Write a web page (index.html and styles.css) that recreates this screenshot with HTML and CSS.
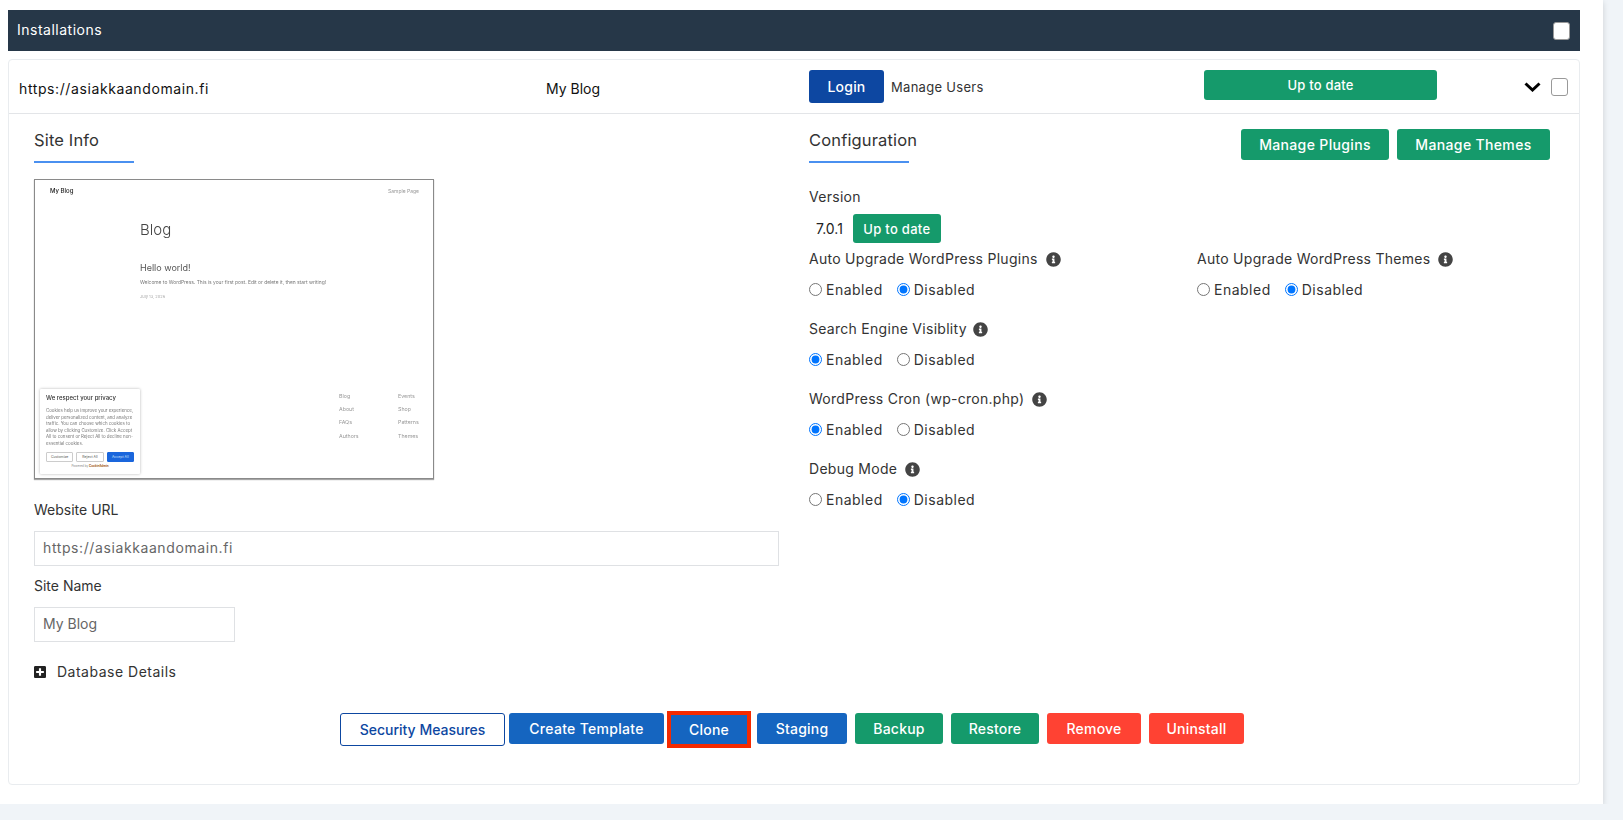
FILE: index.html
```html
<!DOCTYPE html>
<html lang="en">
<head>
    <meta charset="UTF-8">
    <title>Installations</title>
    <link rel="stylesheet" href="styles.css">
</head>
<body>
    <svg class="defs" width="0" height="0">
        <symbol id="info" viewBox="0 0 512 512"><path d="M256 8C119.043 8 8 119.083 8 256c0 136.997 111.043 248 248 248s248-111.003 248-248C504 119.083 392.957 8 256 8zm0 110c23.196 0 42 18.804 42 42s-18.804 42-42 42-42-18.804-42-42 18.804-42 42-42zm56 254c0 6.627-5.373 12-12 12h-88c-6.627 0-12-5.373-12-12v-24c0-6.627 5.373-12 12-12h12v-64h-12c-6.627 0-12-5.373-12-12v-24c0-6.627 5.373-12 12-12h64c6.627 0 12 5.373 12 12v100h12c6.627 0 12 5.373 12 12v24z"/></symbol>
    </svg>
    <div class="panel">
        <div class="panel-head">
            <span class="panel-title">Installations</span>
            <input type="checkbox" class="check">
        </div>
        <div class="card">
            <div class="row">
                <span class="row-url">https://asiakkaandomain.fi</span>
                <span class="row-name">My Blog</span>
                <div class="row-login">
                    <a class="btn btn-navy">Login</a>
                    <span class="manage-users">Manage Users</span>
                </div>
                <div class="row-end">
                    <a class="btn btn-green btn-wide">Up to date</a>
                    <svg class="chevron" viewBox="0 0 17 10"><polyline points="1.5,1.5 8.5,8 15.5,1.5"/></svg>
                    <input type="checkbox" class="check">
                </div>
            </div>
            <div class="details">
                <div class="col-left">
                    <h3 class="title">Site Info</h3>
                    <div class="shot">
                        <div class="shot-top"><b>My Blog</b><span>Sample Page</span></div>
                        <div class="shot-post">
                            <div class="shot-h1">Blog</div>
                            <div class="shot-h2">Hello world!</div>
                            <div class="shot-p">Welcome to WordPress. This is your first post. Edit or delete it, then start writing!</div>
                            <div class="shot-date">July 13, 2026</div>
                        </div>
                        <div class="shot-links">
                            <span>Blog</span><span>Events</span>
                            <span>About</span><span>Shop</span>
                            <span>FAQs</span><span>Patterns</span>
                            <span>Authors</span><span>Themes</span>
                        </div>
                        <div class="cookie">
                            <div class="cookie-title">We respect your privacy</div>
                            <div class="cookie-text">Cookies help us improve your experience, deliver personalized content, and analyze traffic. You can choose which cookies to allow by clicking Customize. Click Accept All to consent or Reject All to decline non-essential cookies.</div>
                            <div class="cookie-btns"><span>Customize</span><span>Reject All</span><span class="cookie-accept">Accept All</span></div>
                            <div class="cookie-foot">Powered by <b>CookieAdmin</b></div>
                        </div>
                    </div>
                    <label class="field-label">Website URL</label>
                    <input class="field" type="text" value="https://asiakkaandomain.fi">
                    <label class="field-label field-label-next">Site Name</label>
                    <input class="field field-short" type="text" value="My Blog">
                    <div class="db-details">
                        <svg class="plus" viewBox="0 0 448 512"><path d="M400 32H48C21.5 32 0 53.5 0 80v352c0 26.5 21.5 48 48 48h352c26.5 0 48-21.5 48-48V80c0-26.5-21.5-48-48-48zm-32 252c0 6.6-5.4 12-12 12h-92v92c0 6.6-5.4 12-12 12h-56c-6.6 0-12-5.4-12-12v-92H92c-6.6 0-12-5.4-12-12v-56c0-6.6 5.4-12 12-12h92v-92c0-6.6 5.4-12 12-12h56c6.6 0 12 5.4 12 12v92h92c6.6 0 12 5.4 12 12v56z"/></svg>
                        <span>Database Details</span>
                    </div>
                </div>
                <div class="col-right">
                    <div class="config-head">
                        <h3 class="title">Configuration</h3>
                        <div class="config-btns">
                            <a class="btn btn-green btn-plugins">Manage Plugins</a>
                            <a class="btn btn-green btn-themes">Manage Themes</a>
                        </div>
                    </div>
                    <div class="opt-label">Version</div>
                    <div class="version">
                        <span>7.0.1</span>
                        <a class="btn btn-green btn-small">Up to date</a>
                    </div>
                    <div class="opt-grid">
                        <div class="opt">
                            <div class="opt-label">Auto Upgrade WordPress Plugins <svg class="info"><use href="#info"/></svg></div>
                            <div class="radios">
                                <label><input type="radio" name="plugins">Enabled</label>
                                <label><input type="radio" name="plugins" checked>Disabled</label>
                            </div>
                        </div>
                        <div class="opt">
                            <div class="opt-label">Auto Upgrade WordPress Themes <svg class="info"><use href="#info"/></svg></div>
                            <div class="radios">
                                <label><input type="radio" name="themes">Enabled</label>
                                <label><input type="radio" name="themes" checked>Disabled</label>
                            </div>
                        </div>
                    </div>
                    <div class="opt">
                        <div class="opt-label opt-label-search">Search Engine Visiblity <svg class="info"><use href="#info"/></svg></div>
                        <div class="radios">
                            <label><input type="radio" name="search" checked>Enabled</label>
                            <label><input type="radio" name="search">Disabled</label>
                        </div>
                    </div>
                    <div class="opt">
                        <div class="opt-label">WordPress Cron (wp-cron.php) <svg class="info"><use href="#info"/></svg></div>
                        <div class="radios">
                            <label><input type="radio" name="cron" checked>Enabled</label>
                            <label><input type="radio" name="cron">Disabled</label>
                        </div>
                    </div>
                    <div class="opt">
                        <div class="opt-label">Debug Mode <svg class="info"><use href="#info"/></svg></div>
                        <div class="radios">
                            <label><input type="radio" name="debug">Enabled</label>
                            <label><input type="radio" name="debug" checked>Disabled</label>
                        </div>
                    </div>
                </div>
            </div>
            <div class="actions">
                <a class="btn btn-outline act-security">Security Measures</a>
                <a class="btn btn-blue act-template">Create Template</a>
                <a class="btn btn-blue btn-marked act-clone">Clone</a>
                <a class="btn btn-blue act-staging">Staging</a>
                <a class="btn btn-green act-backup">Backup</a>
                <a class="btn btn-green act-restore">Restore</a>
                <a class="btn btn-red act-remove">Remove</a>
                <a class="btn btn-red act-uninstall">Uninstall</a>
            </div>
        </div>
    </div>
</body>
</html>
```

FILE: styles.css
```css
body {
    margin: 0;
    background-color: #f0f4f8;
    color: #222;
    font-family: Inter, "Noto Sans", sans-serif;
    font-size: 14px;
}
.defs {
    display: block;
    height: 0;
}
.panel {
    width: 1572px;
    height: 794px;
    padding: 10px 23px 0 8px;
    background: #fff;
    box-shadow: 0 2px 6px rgba(0, 0, 0, 0.15);
}
.panel-head {
    display: flex;
    justify-content: space-between;
    align-items: center;
    height: 41px;
    padding: 0 10px 0 9px;
    background: #263748;
    color: #fff;
}
.panel-title {
    padding-bottom: 2px;
    letter-spacing: 0.5px;
}
.check {
    appearance: none;
    width: 17px;
    height: 18px;
    margin: 0;
    background: #fff;
    border: 1px solid #999;
    border-radius: 3px;
}
.card {
    height: 724px;
    margin-top: 8px;
    border: 1px solid #e9ecef;
    border-radius: 4px;
}
.row {
    display: grid;
    grid-template-columns: 527px 263px 395px 1fr;
    align-items: center;
    height: 53px;
    padding-left: 10px;
    border-bottom: 1px solid #e3e5e8;
    color: #111;
}
.row-url {
    padding-top: 3px;
    letter-spacing: 0.6px;
}
.row-name {
    padding-top: 3px;
}
.row-login {
    display: flex;
    align-items: center;
    gap: 7px;
}
.manage-users {
    font-size: 13px;
    letter-spacing: 0.3px;
    color: #333;
}
.row-end {
    display: flex;
    align-items: center;
    padding-right: 11px;
}
.chevron {
    width: 17px;
    height: 10px;
    margin: 0 10px 0 87px;
    fill: none;
    stroke: #000;
    stroke-width: 3;
}
.btn {
    display: flex;
    justify-content: center;
    align-items: center;
    box-sizing: border-box;
    height: 31px;
    border-radius: 3px;
    color: #fff;
    font-weight: 500;
    font-size: 14px;
    letter-spacing: 0.2px;
}
.btn-navy {
    width: 75px;
    height: 33px;
    background: #0d47a1;
}
.btn-green {
    background: #159a6b;
}
.btn-blue {
    background: #1565c0;
}
.btn-red {
    background: #ff4233;
}
.btn-outline {
    height: 33px;
    background: #fff;
    border: 1px solid #0d47a1;
    color: #0d47a1;
    letter-spacing: 0;
}
.btn-marked {
    height: 37px;
    margin-top: -2px;
    border: 4px solid #f52a00;
    border-radius: 0;
}
.btn-wide {
    width: 233px;
    height: 30px;
    margin-top: -3px;
    font-size: 13px;
}
.details {
    display: grid;
    grid-template-columns: 745px 741px;
    column-gap: 30px;
    height: 599px;
    padding: 0 25px;
}
.title {
    box-sizing: border-box;
    width: 100px;
    height: 49px;
    margin: 0;
    padding: 14px 0 10px;
    border-bottom: 2px solid #4a90f0;
    font-size: 16.5px;
    line-height: 24px;
    font-weight: 400;
    letter-spacing: 0.15px;
    white-space: nowrap;
    color: #333;
}
.shot {
    position: relative;
    box-sizing: border-box;
    width: 400px;
    height: 300px;
    margin-top: 16px;
    padding: 7px 14px 0 15px;
    border: 1px solid #8a8a8a;
    box-shadow: 0 1px 1px rgba(0, 0, 0, 0.35);
    color: #555;
    overflow: hidden;
}
.shot-top {
    display: flex;
    justify-content: space-between;
    font-size: 5px;
    line-height: 8px;
    color: #999;
    filter: blur(0.25px);
}
.shot-top b {
    font-size: 6px;
    color: #222;
    font-weight: 500;
}
.shot-post {
    margin: 25px 0 0 90px;
    filter: blur(0.25px);
}
.shot-h1 {
    font-size: 15px;
    line-height: 20px;
    font-weight: 300;
    color: #444;
}
.shot-h2 {
    margin-top: 22px;
    font-size: 9px;
    line-height: 12px;
    color: #555;
}
.shot-p {
    margin-top: 4px;
    font-size: 4.9px;
    line-height: 8px;
    color: #777;
    white-space: nowrap;
}
.shot-date {
    margin-top: 8px;
    font-size: 4px;
    line-height: 6px;
    color: #aaa;
}
.shot-links {
    position: absolute;
    left: 304px;
    top: 212px;
    display: grid;
    grid-template-columns: 59px auto;
    row-gap: 5px;
    font-size: 5.3px;
    line-height: 8.2px;
    color: #999;
    filter: blur(0.25px);
}
.cookie {
    position: absolute;
    left: 5px;
    top: 209px;
    box-sizing: border-box;
    width: 100px;
    height: 85px;
    padding: 5px 6px 0;
    background: #fff;
    box-shadow: 0 0 3px rgba(0, 0, 0, 0.3);
    border-radius: 1px;
}
.cookie-title {
    font-size: 6px;
    line-height: 8px;
    font-weight: 500;
    color: #333;
    filter: blur(0.25px);
}
.cookie-text {
    margin-top: 6px;
    font-size: 4.4px;
    line-height: 6.5px;
    color: #777;
    filter: blur(0.25px);
}
.cookie-btns {
    display: flex;
    gap: 3px;
    margin-top: 5px;
}
.cookie-btns span {
    flex: 1;
    height: 8px;
    border: 1px solid #ccc;
    border-radius: 1px;
    font-size: 3.5px;
    line-height: 8px;
    text-align: center;
}
.cookie-btns .cookie-accept {
    background: #1a66dc;
    border-color: #1a66dc;
    color: #cfe0fa;
}
.cookie-foot {
    margin-top: 2px;
    font-size: 3px;
    line-height: 5px;
    text-align: center;
    color: #888;
}
.cookie-foot b {
    color: #a5601c;
}
.field-label {
    display: block;
    margin-top: 21px;
    line-height: 20px;
    color: #333;
}
.field-label-next {
    margin-top: 10px;
}
.field {
    display: block;
    box-sizing: border-box;
    width: 745px;
    height: 35px;
    margin-top: 11px;
    padding: 0 8px 2px;
    border: 1px solid #dfe1e4;
    font: inherit;
    letter-spacing: 0.6px;
    color: #666;
    outline: none;
}
.field-short {
    width: 201px;
    letter-spacing: 0;
}
.db-details {
    display: flex;
    align-items: center;
    gap: 11px;
    margin-top: 20px;
    line-height: 20px;
    letter-spacing: 0.5px;
    color: #333;
}
.plus {
    width: 12px;
    height: 14px;
    fill: #222;
}
.config-head {
    display: flex;
    justify-content: space-between;
}
.config-btns {
    display: flex;
    gap: 8px;
    padding-top: 15px;
}
.btn-plugins {
    width: 148px;
    letter-spacing: 0.35px;
}
.btn-themes {
    width: 153px;
    letter-spacing: 0.35px;
}
.opt-label {
    display: flex;
    align-items: center;
    gap: 8px;
    line-height: 20px;
    letter-spacing: 0.28px;
    color: #333;
}
.opt-label-search {
    gap: 6px;
}
.config-head + .opt-label {
    margin-top: 24px;
}
.version {
    display: flex;
    align-items: center;
    gap: 10px;
    margin-top: 7px;
    padding-left: 7px;
    color: #222;
}
.btn-small {
    width: 88px;
    height: 29px;
    font-size: 13px;
    letter-spacing: 0.3px;
}
.opt-grid {
    display: grid;
    grid-template-columns: 388px 1fr;
    margin-top: 6px;
}
.opt {
    height: 70px;
}
.info {
    width: 15px;
    height: 15px;
    fill: #444;
}
.radios {
    display: flex;
    gap: 14px;
    margin-top: 11px;
    line-height: 20px;
    letter-spacing: 0.5px;
    color: #333;
}
.radios label {
    display: flex;
    align-items: center;
}
.radios input {
    width: 13px;
    height: 13px;
    margin: 0 4px 2px 0;
}
.actions {
    display: flex;
    align-items: flex-start;
    gap: 4px;
    padding-left: 331px;
}
.act-security {
    width: 165px;
}
.act-template {
    width: 155px;
    letter-spacing: 0.3px;
}
.act-clone {
    width: 84px;
    margin-left: -1px;
    margin-right: 2px;
}
.act-staging {
    width: 90px;
}
.act-backup, .act-restore {
    width: 88px;
    margin-left: 4px;
}
.act-remove {
    width: 94px;
    margin-left: 4px;
}
.act-uninstall {
    width: 95px;
    margin-left: 4px;
}
```
